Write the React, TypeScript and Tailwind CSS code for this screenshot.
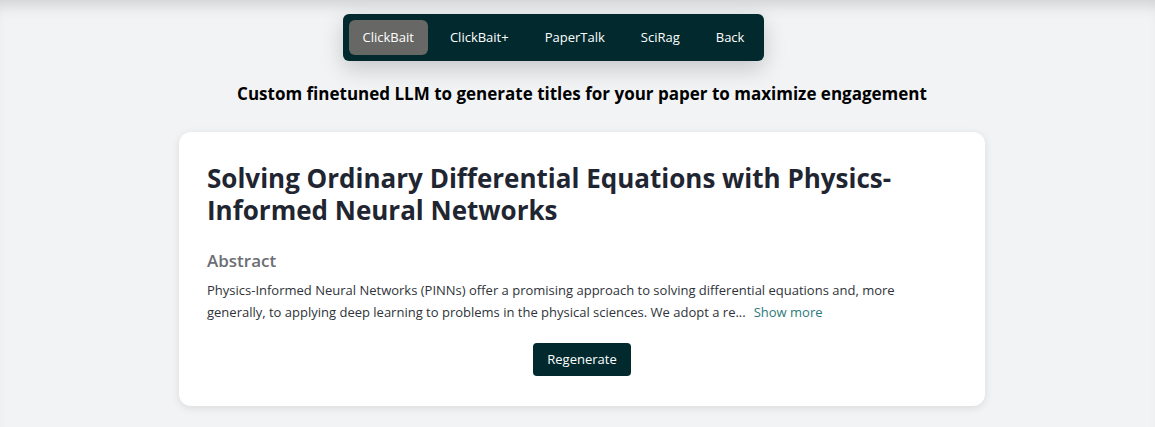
import { useState } from "react";

const tabs = ["ClickBait", "ClickBait+", "PaperTalk", "SciRag", "Back"];

function App() {
  const [active, setActive] = useState("ClickBait");

  return (
    <div
      className="min-h-[427px] bg-[#f2f3f5] shadow-[inset_0_14px_16px_-10px_rgba(0,0,0,0.16)] text-[#1a202c]"
      style={{ fontFamily: '"Open Sans", "Noto Sans", sans-serif' }}
    >
      {/* NAV */}
      <div className="flex justify-center pt-[14px] pr-[48px]">
        <nav className="flex items-center gap-[8px] rounded-md bg-[#022a2e] p-[6px] shadow-[0_8px_22px_rgba(0,0,0,0.18)]">
          {tabs.map((t) => (
            <button
              key={t}
              onClick={() => setActive(t)}
              className={
                t === active
                  ? "h-[35px] rounded-md bg-[#676865] px-[14px] text-[13px] text-white"
                  : "h-[35px] rounded-md px-[14px] text-[13px] text-white"
              }
            >
              {t}
            </button>
          ))}
        </nav>
      </div>

      <div className="pl-[9px]">
        {/* SUBTITLE */}
        <h2 className="mt-[20px] text-center text-[17px] font-bold text-black">
          Custom finetuned LLM to generate titles for your paper to maximize engagement
        </h2>

        {/* CARD */}
        <div className="mx-auto mt-[25px] w-[806px] rounded-xl bg-white px-[28px] pt-[30px] pb-[30px] shadow-[0_2px_8px_rgba(0,0,0,0.1)]">
          <h1 className="text-[26px] font-bold leading-[32px] text-[#1f2531]">
            Solving Ordinary Differential Equations with Physics-Informed Neural Networks
          </h1>

          <h3 className="mt-[22px] text-[17px] font-semibold text-[#6b6e74]">Abstract</h3>
          <div className="mt-[6px] pr-[60px] text-[13px] leading-[22px] text-[#2f333a]">
            <span>
              Physics-Informed Neural Networks (PINNs) offer a promising approach to solving differential equations and, more
              generally, to applying deep learning to problems in the physical sciences. We adopt a re...
            </span>
            <span className="ml-[8px] cursor-pointer text-[#2c7a7b]">Show more</span>
          </div>

          <div className="mt-[20px] flex justify-center">
            <button className="h-[33px] rounded-[4px] bg-[#022a2e] px-[14px] text-[13px] text-white">
              Regenerate
            </button>
          </div>
        </div>
      </div>
    </div>
  );
}

export default App;
